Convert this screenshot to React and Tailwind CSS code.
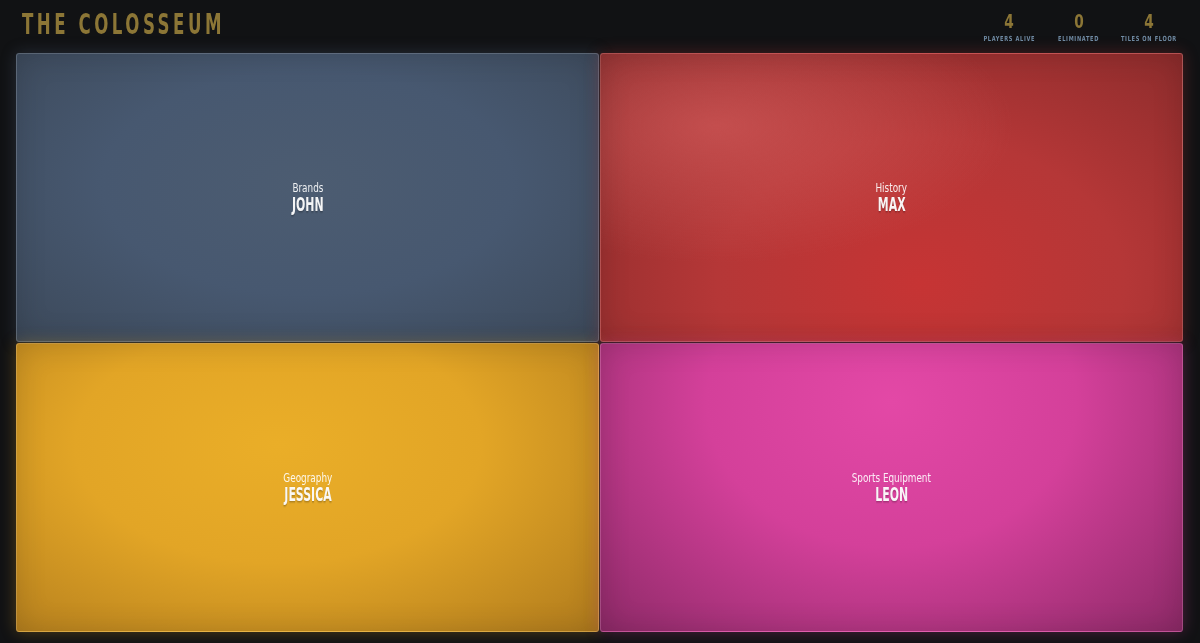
const TILES = [
  { category: 'Brands', name: 'JOHN', bg: 'bg-[radial-gradient(ellipse_at_50%_45%,#4c5c71_0%,#475870_50%,#3c495a_100%)]', glow: 'shadow-[0_0_16px_rgba(90,110,140,0.3),inset_0_0_30px_rgba(0,0,0,0.15)]' },
  { category: 'History', name: 'MAX', bg: 'bg-[radial-gradient(ellipse_at_20%_25%,rgba(210,90,90,0.7)_0%,rgba(210,90,90,0)_45%),radial-gradient(ellipse_at_55%_80%,#c63434_0%,#b53737_45%,#852a2a_100%)]', glow: 'shadow-[0_0_16px_rgba(200,60,60,0.3),inset_0_0_30px_rgba(0,0,0,0.15)]' },
  { category: 'Geography', name: 'JESSICA', bg: 'bg-[radial-gradient(ellipse_at_45%_35%,#eaae28_0%,#e2a526_45%,#b07b1d_100%)]', glow: 'shadow-[0_0_16px_rgba(230,170,40,0.3),inset_0_0_30px_rgba(0,0,0,0.15)]' },
  { category: 'Sports Equipment', name: 'LEON', bg: 'bg-[radial-gradient(ellipse_at_50%_20%,#e348a6_0%,#d4409a_45%,#8e2a68_100%)]', glow: 'shadow-[0_0_16px_rgba(220,70,160,0.3),inset_0_0_30px_rgba(0,0,0,0.15)]' }
]

const STATS = [
  { value: 4, label: 'PLAYERS ALIVE' },
  { value: 0, label: 'ELIMINATED' },
  { value: 4, label: 'TILES ON FLOOR' }
]

const font = { fontFamily: '"DejaVu Sans Condensed", "Liberation Sans Narrow", "Liberation Sans", sans-serif' }

export default function App() {
  return (
    <div className="w-[1200px] h-[643px] bg-[#111214] flex flex-col overflow-hidden" style={font}>
      <header className="h-[53px] flex items-start justify-between pl-[22px] pr-[16px]">
        <h1 className="mt-[10px] text-[28px] leading-[30px] font-bold tracking-[0.19em] text-[#8c7636] scale-x-[0.66] origin-left whitespace-nowrap">
          THE COLOSSEUM
        </h1>
        <div className="flex mt-[12px]">
          {STATS.map((s) => (
            <div key={s.label} className="w-[70px] flex flex-col items-center">
              <span className="text-[19px] leading-[19px] font-bold text-[#8c7636] scale-x-[0.8]">{s.value}</span>
              <span className="mt-[4px] text-[7px] leading-[8px] font-bold tracking-[0.12em] text-[#6f8aa3] scale-x-[0.8] whitespace-nowrap">{s.label}</span>
            </div>
          ))}
        </div>
      </header>
      <main className="grid grid-cols-2 grid-rows-2 gap-[1px] pl-[16px] pr-[17px] pb-[11px] flex-1">
        {TILES.map((t) => (
          <div
            key={t.name}
            className={`rounded-[3px] border border-white/15 flex flex-col items-center justify-center ${t.bg} ${t.glow}`}
          >
            <span className="text-[12px] leading-[13px] text-white/90 scale-x-[0.82] whitespace-nowrap">{t.category}</span>
            <span className="text-[19px] leading-[19px] font-bold text-white/95 scale-x-[0.64] drop-shadow-[0_1px_1px_rgba(0,0,0,0.35)]">{t.name}</span>
          </div>
        ))}
      </main>
    </div>
  )
}
